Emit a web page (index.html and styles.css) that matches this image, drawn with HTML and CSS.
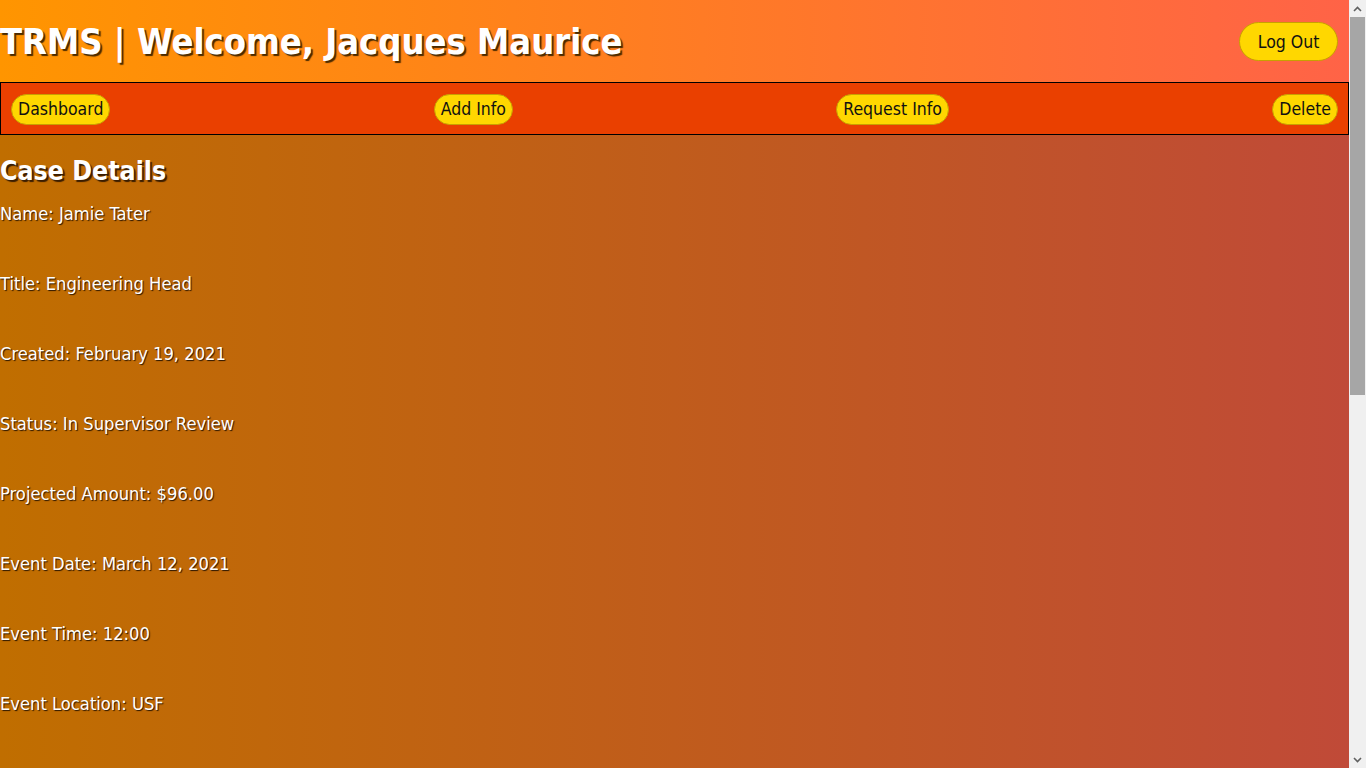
FILE: index.html
```html
<!DOCTYPE html>
<html lang="en">
<head>
<meta charset="utf-8">
<title>TRMS | Case Details</title>
<link rel="stylesheet" href="styles.css">
</head>
<body>
<div class="page">
  <header class="topbar">
    <h1 class="title">TRMS | Welcome, Jacques Maurice</h1>
    <button class="pill pill-lg">Log Out</button>
  </header>
  <nav class="navbar">
    <button class="pill">Dashboard</button>
    <button class="pill">Add Info</button>
    <button class="pill">Request Info</button>
    <button class="pill">Delete</button>
  </nav>
  <main class="content">
    <h2 class="heading">Case Details</h2>
    <div class="details">
      <p class="field">Name: Jamie Tater</p>
      <p class="field">Title: Engineering Head</p>
      <p class="field">Created: February 19, 2021</p>
      <p class="field">Status: In Supervisor Review</p>
      <p class="field">Projected Amount: $96.00</p>
      <p class="field">Event Date: March 12, 2021</p>
      <p class="field">Event Time: 12:00</p>
      <p class="field">Event Location: USF</p>
    </div>
  </main>
</div>
<div class="scrollbar" aria-hidden="true">
  <div class="sb-btn">
    <svg width="9" height="6" viewBox="0 0 9 6"><path d="M1 5 L4.5 1.5 L8 5" fill="none" stroke="#606060" stroke-width="1.6"/></svg>
  </div>
  <div class="sb-track"><div class="sb-thumb"></div></div>
  <div class="sb-btn">
    <svg width="9" height="6" viewBox="0 0 9 6"><path d="M1 1 L4.5 4.5 L8 1" fill="none" stroke="#606060" stroke-width="1.6"/></svg>
  </div>
</div>
</body>
</html>
```

FILE: styles.css
```css
html, body {
  margin: 0;
  padding: 0;
}
body {
  font-family: "DejaVu Sans Condensed", "DejaVu Sans", sans-serif;
  background: #f0f0f0;
  color: #fff;
}
.page {
  margin-right: 17px;
  background: linear-gradient(to right, #c06e00, #c04a38);
}
.topbar {
  display: flex;
  align-items: center;
  justify-content: space-between;
  height: 82px;
  padding: 0 11px 0 0;
  box-sizing: border-box;
  background: linear-gradient(to right, #ff9500, #ff6347);
}
.title {
  margin: 0;
  font-size: 36px;
  font-weight: bold;
  color: #fff;
  text-shadow: 2px 2px 1px #4a2a00;
}
.pill {
  font-family: "DejaVu Sans Condensed", "DejaVu Sans", sans-serif;
  font-size: 17.5px;
  color: #111;
  background: #ffd700;
  border: 1px solid #c8a000;
  border-radius: 16px;
  padding: 0 6px;
  height: 31px;
  cursor: pointer;
}
.pill-lg {
  height: 39px;
  width: 99px;
  border-radius: 20px;
  margin-top: 1px;
}
.navbar {
  display: flex;
  justify-content: space-between;
  align-items: center;
  height: 53px;
  box-sizing: border-box;
  padding: 1px 10px 0;
  background: #ea4000;
  border: 1px solid #000;
}
.content {
  min-height: 1356px;
  box-sizing: border-box;
  padding-top: 1px;
}
.heading {
  margin: 20px 0 0;
  font-size: 26.5px;
  font-weight: bold;
  text-shadow: 2px 2px 1px #3a1d00;
  line-height: 30px;
}
.details {
  display: flex;
  flex-direction: column;
  gap: 50px;
  margin-top: 18px;
}
.field {
  margin: 0;
  font-size: 18.2px;
  line-height: 20px;
  text-shadow: 1px 1px 1px #2a1500;
}
.scrollbar {
  position: fixed;
  top: 0;
  right: 0;
  width: 17px;
  height: 100vh;
  background: #f0f0f0;
  display: flex;
  flex-direction: column;
}
.sb-btn {
  height: 17px;
  display: flex;
  align-items: center;
  justify-content: center;
  flex: none;
}
.sb-track {
  flex: 1;
  padding: 0 1px;
}
.sb-thumb {
  height: 378px;
  background: #a6a6a6;
}
```
